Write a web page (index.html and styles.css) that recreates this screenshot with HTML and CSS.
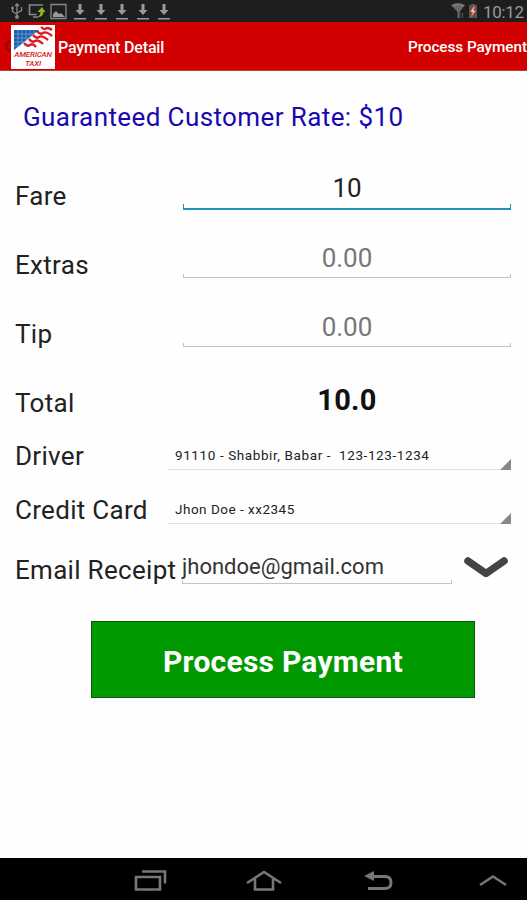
FILE: index.html
```html
<!DOCTYPE html>
<html lang="en">
<head>
    <meta charset="UTF-8">
    <meta name="viewport" content="width=device-width, initial-scale=1.0">
    <title>Payment Detail</title>
    <link rel="stylesheet" href="styles.css">
</head>
<body>
    <!-- Status bar -->
    <div class="status-bar">
        <svg class="status-icons" width="180" height="22" viewBox="0 0 180 22" fill="none" stroke="#888" stroke-width="1.3">
            <path d="M17 4v14M12.500 8v3.500l4.500 3M21.500 7v3.500L17 13M15 6l2-2 2 2"/>
            <circle cx="17" cy="17" r="1.300" fill="#888"/>
            <circle cx="12.500" cy="8" r=".8"/>
            <path d="M43 5H29.500v9.500h7M33 17h5" stroke-width="1.700"/>
            <path d="M42 7l-4.500 5h3q0 3-3 5.500 6-1 6-5.500h2z" fill="#8ab81c" stroke="none"/>
            <path d="M51 4.500h15v14H51z"/>
            <path d="M53 17v-3l3-3 3 3 2-1 4 4z" fill="#999" stroke="none"/>
            <g fill="#999" stroke="none">
                <path d="M78.500 4h3v6h3l-4.500 5-4.500-5h3zM74 18h12v1.500H74z"/>
                <path d="M99.500 4h3v6h3l-4.500 5-4.500-5h3zM95 18h12v1.500H95z"/>
                <path d="M120.500 4h3v6h3l-4.500 5-4.500-5h3zM116 18h12v1.500h-12z"/>
                <path d="M141.500 4h3v6h3l-4.500 5-4.500-5h3zM137 18h12v1.500h-12z"/>
                <path d="M162.500 4h3v6h3l-4.500 5-4.500-5h3zM158 18h12v1.500h-12z"/>
            </g>
        </svg>
        <svg width="30" height="22" viewBox="0 0 30 22">
            <path d="M0 5q7-4 14 0L8.500 12v6h-2v-6z" fill="#666"/>
            <path d="M1.500 6q6-3 11 0" fill="none" stroke="#888"/>
            <path d="M9 12v6M11.500 13v5" stroke="#555"/>
            <path d="M18 5h2V4h4v1h2v13h-8z" fill="#555"/>
            <path d="M23 6l-4 6h2.500L20 17l5-6.500h-2.500L24 6z" fill="#ffd6c8" stroke="#e0432e" stroke-width=".8"/>
        </svg>
        <span class="clock">10:12</span>
    </div>

    <!-- Action bar -->
    <div class="action-bar">
        <svg class="back" width="6" height="14" viewBox="0 0 6 14"><path d="M5 1.500L1.500 5v4L5 12.500" fill="none" stroke="#920000" stroke-width="2"/></svg>
        <div class="logo">
            <svg width="44" height="25" viewBox="0 0 44 25">
                <path d="M3 5h25L3 25z" fill="#1c5cac"/>
                <path d="M3 9h21M3 13h17M3 17h11M3 21h7M7 5v17M11 5v13M15 5v10M19 5v7M23 5v4" stroke="#8eb4dc" stroke-width=".6"/>
                <g fill="none" stroke="#d91c24" stroke-width="2.400">
                    <path d="M30 2q3 3 5 1.500t6 1.500"/>
                    <path d="M26 6q3 4 6 2t9 3"/>
                    <path d="M22 10q3 4 6 2t9 3"/>
                    <path d="M18 14q3 4 6 2t8 3"/>
                    <path d="M13 18q3 4 6 2t6 2"/>
                </g>
            </svg>
            <div class="logo-text">AMERICAN</div>
            <div class="logo-text">TAXI</div>
        </div>
        <span class="title">Payment Detail</span>
        <span class="action">Process Payment</span>
    </div>

    <!-- Payment form -->
    <div class="content">
        <div class="rate">Guaranteed Customer Rate: $10</div>

        <div class="row">
            <div class="label">Fare</div>
            <div class="field active">10</div>
        </div>
        <div class="row">
            <div class="label">Extras</div>
            <div class="field hint">0.00</div>
        </div>
        <div class="row">
            <div class="label">Tip</div>
            <div class="field hint">0.00</div>
        </div>
        <div class="row row-total">
            <div class="label">Total</div>
            <div class="total">10.0</div>
        </div>
        <div class="row row-driver">
            <div class="label">Driver</div>
            <div class="spinner driver">91110 - Shabbir, Babar -&nbsp; 123-123-1234</div>
        </div>
        <div class="row row-card">
            <div class="label">Credit Card</div>
            <div class="spinner card">Jhon Doe - xx2345</div>
        </div>
        <div class="row row-email">
            <div class="label">Email Receipt</div>
            <div class="field email">jhondoe@gmail.com</div>
            <svg class="expand" width="44" height="24" viewBox="0 0 44 24"><path d="M4 5L22 17.500 40 5" fill="none" stroke="#444" stroke-width="7.500" stroke-linecap="round" stroke-linejoin="round"/></svg>
        </div>

        <div class="process-button">Process Payment</div>
    </div>

    <!-- Navigation bar -->
    <div class="nav-bar">
        <svg width="34" height="26" viewBox="0 0 34 26" fill="none" stroke="#777" stroke-width="2.600"><path d="M3 9h24v12.500H3zM9 3.500h23v12"/></svg>
        <svg width="36" height="26" viewBox="0 0 36 26" fill="none" stroke="#777" stroke-width="2.600"><path d="M1 15L18 4l17 11M9 11v10.500h18V11"/></svg>
        <svg width="30" height="26" viewBox="0 0 30 26" fill="none" stroke="#777" stroke-width="3"><path d="M8 8.500h13q6 0 6 6t-6 6H4"/><path d="M0 8l10-5v10z" fill="#777" stroke="none"/></svg>
        <svg width="28" height="26" viewBox="0 0 28 26" fill="none" stroke="#777" stroke-width="2.500"><path d="M1 17L14 8.500l13 8.500"/></svg>
    </div>
</body>
</html>
```
FILE: styles.css
```css
* {
    box-sizing: border-box;
}

body {
    margin: 0;
    width: 527px;
    height: 900px;
    display: flex;
    flex-direction: column;
    overflow: hidden;
    background-color: #fefefe;
    font-family: Roboto, sans-serif;
    color: #222;
    white-space: nowrap;
}

svg {
    display: block;
    flex: none;
}

/* Status bar */
.status-bar {
    display: flex;
    height: 22px;
    flex: none;
    background-color: #1e1e1e;
}

.status-icons {
    margin-right: 271px;
}

.clock {
    margin-left: 2px;
    font-size: 17px;
    line-height: 24px;
    letter-spacing: -0.3px;
    color: #999;
}

/* Action bar */
.action-bar {
    display: flex;
    align-items: center;
    height: 49px;
    flex: none;
    padding: 0 0 0 5px;
    background-color: #d20000;
    border-bottom: 1px solid #b84040;
    color: #fff;
    font-size: 16px;
}

.logo {
    width: 44px;
    height: 44px;
    margin: 2px 3px 0 0;
    background-color: #fff;
}

.logo-text {
    font-size: 8px;
    line-height: 9px;
    font-style: italic;
    font-weight: 500;
    text-align: center;
    letter-spacing: -0.2px;
    color: #d91c24;
}

.title {
    margin-top: 2px;
    font-weight: 500;
    letter-spacing: -0.15px;
}

.action {
    margin: 2px 0 0 auto;
    font-size: 15.3px;
    font-weight: 500;
    letter-spacing: -0.05px;
}

/* Form */
.content {
    flex: 1;
}

.rate {
    height: 102px;
    padding: 31px 0 0 23px;
    font-size: 26px;
    line-height: 30px;
    letter-spacing: 0.4px;
    color: #1808b0;
}

.row {
    display: flex;
    align-items: flex-start;
    height: 69px;
    padding: 0 16px 0 15px;
    font-size: 26px;
    line-height: 30px;
}

.label {
    width: 168px;
    padding-top: 8px;
    flex: none;
    letter-spacing: 0.3px;
}

.field {
    position: relative;
    height: 36px;
    flex: 1;
    text-align: center;
}

/* Bottom line with the short ticks at both ends */
.field::after {
    content: "";
    position: absolute;
    left: 0;
    right: 0;
    bottom: 0;
    height: 3px;
    border: 1px solid #c4c4c4;
    border-top: none;
}

.active {
    height: 37px;
}

.active::after {
    height: 4px;
    border-color: #2292bd;
    border-bottom-width: 2px;
}

.hint {
    padding-top: 1px;
    color: #777;
}

.row-total {
    height: 54px;
}

.total {
    flex: 1;
    padding-top: 5px;
    font-size: 29px;
    font-weight: bold;
    letter-spacing: 0.3px;
    text-align: center;
    color: #111;
}

.row-driver {
    height: 53px;
}

.row-driver .label {
    padding-top: 7px;
}

.row-card {
    height: 60px;
}

.spinner {
    position: relative;
    height: 36px;
    flex: 1;
    margin-left: -15px;
    padding: 6px 0 0 7px;
    border-bottom: 1px solid #e2e2e2;
    font-size: 13.5px;
    letter-spacing: 0.6px;
}

.card {
    height: 37px;
    padding-top: 7px;
    letter-spacing: 0.5px;
}

.spinner::after {
    content: "";
    position: absolute;
    right: 0;
    bottom: -1px;
    border-left: 11px solid transparent;
    border-bottom: 11px solid #888;
}

.row-email {
    height: 74px;
    padding-right: 19px;
}

.email {
    height: 33px;
    margin: 4px 12px 0 -1px;
    padding-top: 1px;
    font-size: 22px;
    text-align: left;
    color: #333;
}

.email + .expand {
    margin-top: 9px;
}

.process-button {
    width: 384px;
    height: 77px;
    margin-left: 91px;
    border: 1px solid #155515;
    background-color: #009900;
    color: #fff;
    font-size: 30px;
    font-weight: bold;
    line-height: 79px;
    letter-spacing: 0.25px;
    text-align: center;
}

/* Navigation bar */
.nav-bar {
    display: grid;
    grid-template-columns: 113px 118px 115px 28px;
    align-items: center;
    height: 42px;
    flex: none;
    padding: 3px 0 0 133px;
    background-color: #000;
}
```
